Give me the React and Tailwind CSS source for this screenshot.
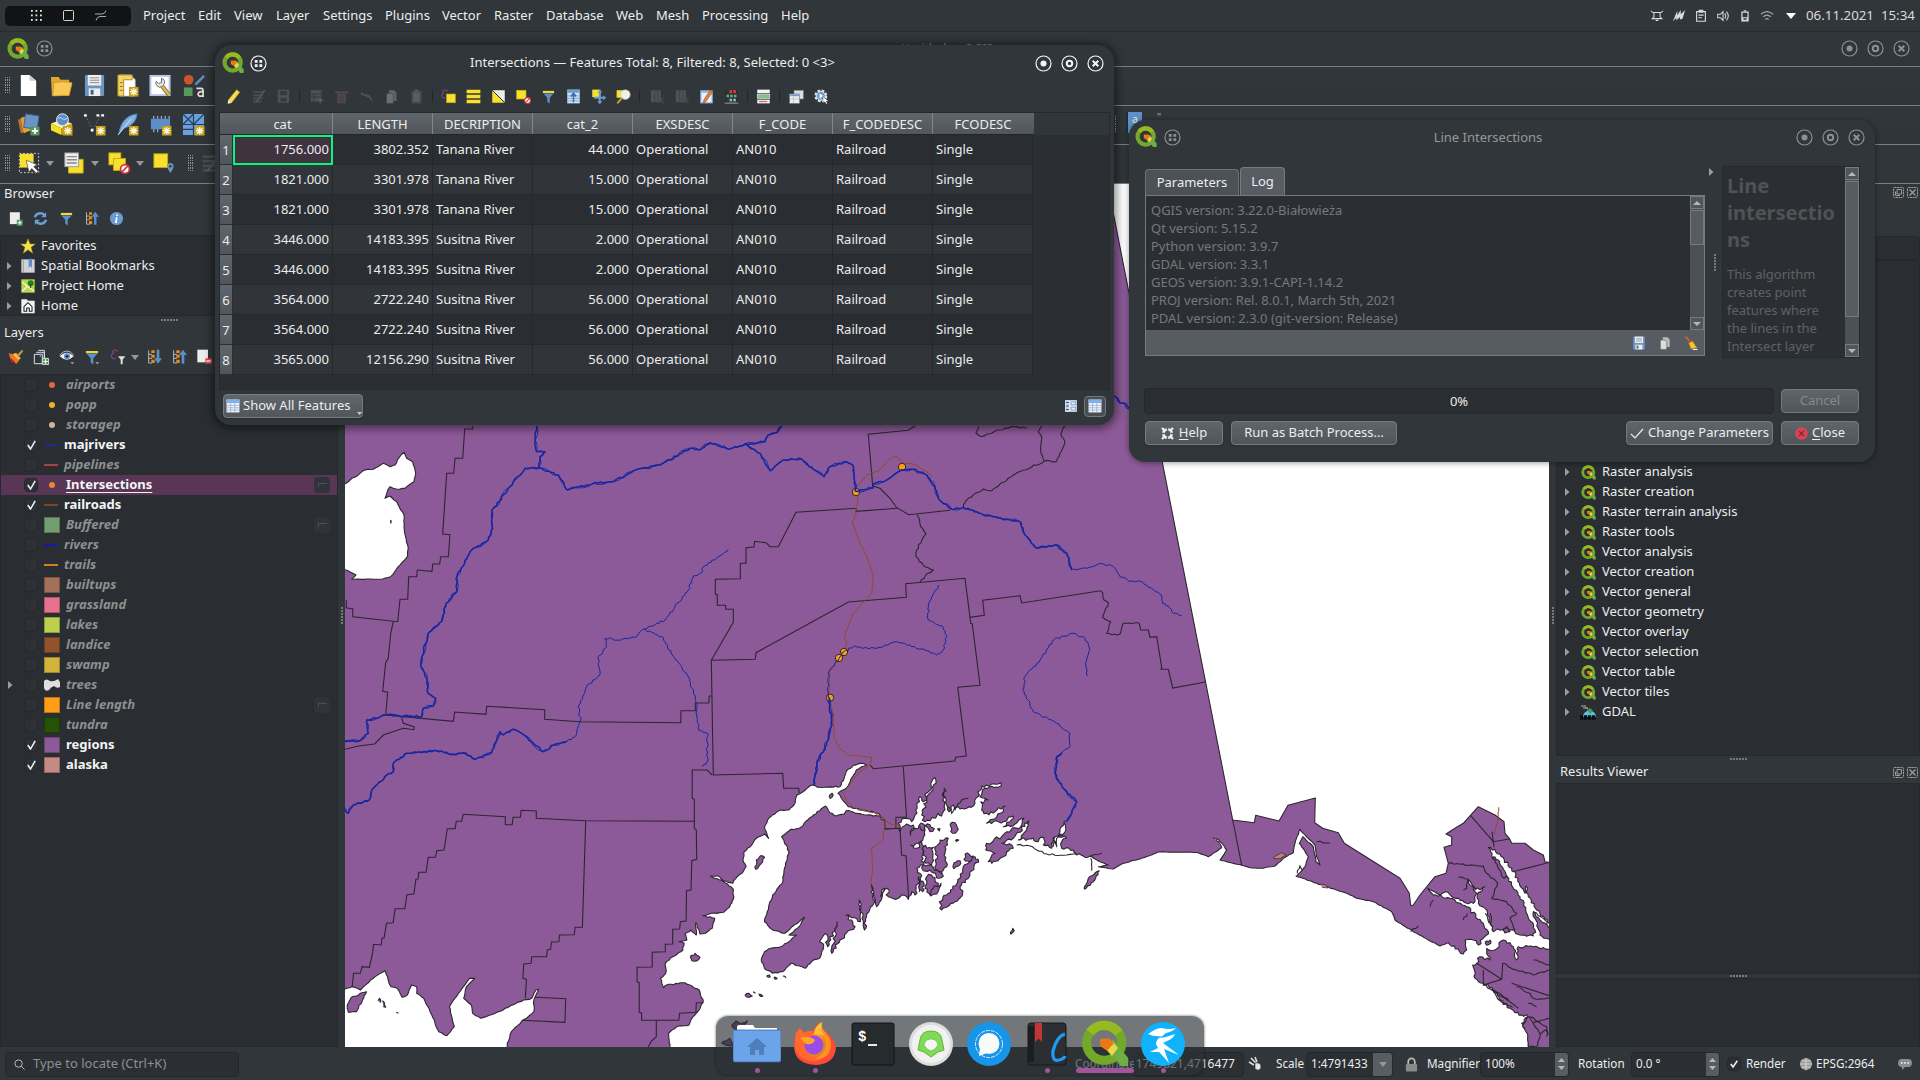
import React from "react";

/* ---------- map geometry ---------- */

// Maps a flat "x,y x,y" list drawn on a local grid to canvas coordinates.
const grid = (ox, oy, kx, ky) => (s) =>
  s.trim().split(/\s+/).map((p) => {
    const [x, y] = p.split(",").map(Number);
    return [ox + x / kx, oy + y / ky];
  });
const NW = grid(340, 420, 3, 3);
const MID = grid(680, 420, 3, 3);
const NE = grid(1080, 420, 3, 3);
const SW = grid(340, 760, 2.45, 3);
const SE = grid(1200, 760, 3, 3);
const PWS = grid(880, 750, 3, 3);

const line = (pts) => "M" + pts.map((p) => p[0].toFixed(1) + " " + p[1].toFixed(1)).join("L");

// Breaks a line into short steps and moves them sideways for a natural shoreline.
const rough = (pts, amp = 1, seed = 7, step = 3) => {
  let r = seed;
  const rnd = () => {
    r = (r * 16807) % 2147483647;
    return r / 2147483647 - 0.5;
  };
  const out = [pts[0]];
  for (let i = 1; i < pts.length; i++) {
    const [ax, ay] = pts[i - 1];
    const [bx, by] = pts[i];
    const d = Math.hypot(bx - ax, by - ay);
    const n = Math.max(1, Math.round(d / step));
    const a = typeof amp === "function" ? amp(ax, ay) : amp;
    for (let k = 1; k <= n; k++) {
      const t = k / n;
      const j = k === n ? 0 : rnd() * 2 * a;
      out.push([ax + (bx - ax) * t - ((by - ay) / (d || 1)) * j, ay + (by - ay) * t + ((bx - ax) / (d || 1)) * j]);
    }
  }
  return line(out);
};
// Fjord country is far more ragged than the open coast.
const coastAmp = (x, y) => (x > 880 && x < 1085 && y > 775 ? 2 : x > 820 && x < 925 && y > 890 ? 1.6 : x > 1440 ? 1.5 : x > 1085 ? 0.35 : 0.6);

const ocean = [
  ...SW("808,900 808,862 805,820 825,800 855,795 865,770 880,750 890,725 880,690 845,668 800,675 793,683 785,655 798,640 797,610 815,590 840,570 843,550 830,545 850,540 845,522 860,510 873,525 872,488 882,522 895,520 912,505 918,475 888,467 910,460 940,457 955,440 965,410 962,385 940,365 908,348 925,347 940,362 962,370 970,355 985,340 995,320 987,300 990,275 1005,260 1020,235 1040,222 1050,235 1040,200 1050,175 1075,152 1100,150 1112,135 1120,105 1140,90 1155,75 1175,82 1225,80 1235,55 1240,35 1258,15 1280,10 1290,15 1265,30 1250,65 1240,85 1220,100 1245,140 1280,150 1320,160 1333,180 1318,168 1290,165 1240,152 1235,163 1215,168 1200,158 1190,138 1160,165 1125,205 1105,208 1082,230 1100,275 1088,330 1085,365 1060,405 1050,440 1040,485 1060,510 1090,520 1110,498 1138,472 1125,500 1100,525 1118,525 1100,545 1080,560 1055,565 1040,575 1032,600 1040,625 1060,640 1085,635 1105,610 1140,625 1160,600 1175,595 1185,560 1175,545 1190,520 1195,560 1218,485 1205,580 1225,540 1250,510 1262,500 1240,465 1275,485 1272,420 1285,510 1290,470 1308,430 1302,375 1315,440 1335,385 1325,410"),
  ...PWS("8,430 20,415 25,440 55,445 65,435 85,448 95,425 105,435 116,380 118,425 128,400 120,370 110,355 130,345 125,320 135,300 125,275 110,295 92,285 115,280 130,262 135,240 125,225 100,240 92,255 100,225 80,222 60,245 55,220 75,205 95,215 105,195 120,140 130,155 165,83 168,100 140,150 125,195 135,215 165,205 175,190 185,198 190,185 193,115 200,165 207,185 220,165 225,180 235,170 260,175 285,160 305,108 355,102 363,98 355,112 315,115 300,140 325,150 302,155 305,180 320,190 345,185 375,168 360,190 320,220 370,215 400,198 390,215 370,230 405,222 432,205 425,225 370,255 320,280 317,300 345,310 325,335 335,340 370,320 400,295 395,285 365,280 400,265 447,212 440,240 415,270 460,265 475,275 490,262 490,285 515,295 520,262 528,285 525,260 540,245 553,212 555,245 535,260 560,265 545,275 545,295 580,300 590,315 630,318 660,335 685,345 655,350"),
  ...NE("100,1347 125,1332 190,1313 235,1296 300,1296 355,1298 385,1310 425,1283 415,1265 400,1255 415,1258 430,1275 440,1290 420,1320 485,1336 510,1343 545,1345 585,1338 610,1315 640,1298 645,1270 660,1228 670,1240 705,1275 710,1310 720,1335 708,1325 700,1280 668,1250 658,1270 685,1310 675,1340 650,1368"),
  ...SE("288,348 350,370 440,400 470,415 520,425 575,455 585,480 640,515 720,558 745,548 790,582 800,570 795,540 820,540 835,555 860,525 865,515 850,490 800,440 750,415 700,405 683,385 720,405 735,395 755,410 800,430 825,425 830,400 805,360 825,390 855,380 832,405 835,430 860,450 880,515 920,500 960,525 1000,528 1005,510 960,410 920,350 885,300 865,262 885,268 935,325 975,400 978,378 985,410 1010,450 1060,500 1060,510 1020,480 1000,455 1020,525 1060,545 1060,568 1000,560 955,560 950,600 940,560 910,540 885,570 860,565 870,600 840,590 830,610 818,615 825,655 850,670 880,690 900,720 930,745 965,765 985,770 965,790 985,820 985,900"),
];
const canada = [
  [1106, 176],
  ...NE("458,1200 523,1208 527,1186 597,1203 624,1156 706,1134 704,1208 728,1225 775,1238 793,1270 960,1375"),
  ...SE("600,355 628,400 632,437 640,435 660,405 705,350 738,340 745,310 732,262 755,255 755,230 738,222 765,205 790,190 835,140 885,165 912,185 915,220 928,235 935,250 975,250 1000,270 1030,285 1035,305 1060,308"),
  [1560, 176],
];
const bristol = SW("-9,695 30,680 50,690 75,660 110,632 118,660 125,680 140,685 152,712 165,705 175,675 188,680 188,700 205,715 225,765 242,815 262,827 280,800 268,740 290,700 318,655 330,655 310,680 303,715 322,735 325,760 345,775 380,760 450,720 470,715 480,690 487,688 475,720 475,755 445,785 420,815 410,850 410,880 -9,880");
const lake = NW("0,205 30,180 75,150 100,148 130,130 150,140 165,135 178,112 192,97 200,115 218,125 227,160 222,185 195,205 170,208 150,200 142,215 135,235 150,228 170,245 192,285 193,330 205,385 203,408 175,440 152,470 120,478 35,478 48,465 0,440");

const islands = [
  PWS("295,328 270,375 240,410 248,430 225,455 185,480 178,455 200,435 240,385 250,350 285,320 295,328"),
  PWS("135,228 150,224 163,236 150,245 135,228"),
  PWS("210,225 225,218 235,238 218,250 210,225"),
  PWS("220,345 240,332 236,348 222,356 220,345"),
  PWS("255,312 280,318 270,335 252,328 255,312"),
  PWS("165,300 180,270 205,265 195,310 200,350 185,372 165,350 172,325 165,300"),
  PWS("125,350 150,345 190,378 178,385 150,360 130,362 125,350"),
  PWS("140,380 155,375 175,400 150,435 135,415 140,380"),
  PWS("160,415 183,400 170,432 152,438 160,415"),
  PWS("130,290 160,292 155,345 138,340 130,290"),
  PWS("118,225 130,222 134,240 122,238 118,225"),
  PWS("172,236 180,236 178,243 172,236"),
  PWS("120,395 132,400 128,425 118,418 120,395"),
  PWS("613,418 625,385 658,362 640,395 613,418"),
  PWS("392,553 398,535 403,542 392,553"),
  PWS("226,272 236,270 228,275"),
  SW("1018,328 1020,300 1030,287 1040,292 1025,322 1018,328"),
  SW("858,592 870,580 882,592 874,603 862,602 858,592"),
  SW("1198,112 1206,100 1208,106 1200,116"),
  SW("18,740 28,712 65,695 40,755 20,757 18,740"),
  SW("93,722 97,715 99,728"), SW("104,722 112,742 106,740"), SW("138,757 143,760"),
  SW("992,706 1002,700 1010,708 998,712 992,706"), SW("1012,695 1018,700"), SW("1025,702 1036,709 1027,706"),
  SW("1045,648 1052,645 1054,651 1045,648"), SW("1063,652 1071,656 1066,658 1063,652"), SW("1085,648 1093,654"),
  SW("960,800 970,782 985,790 998,782 990,800 975,815 960,800"), SW("935,850 955,835 962,858 945,856 935,850"),
  SE("878,290 895,300 922,350 912,355 895,325 878,290"),
  SE("855,548 870,540 872,550 860,556 855,548"), SE("908,510 925,505 930,515 915,519 908,510"),
  SE("1000,790 1030,780 1055,775 1055,830 1035,810 1018,822 1000,790"),
  SE("985,770 1000,790 1020,820 1010,860 985,862 982,820 968,800 985,770"),
];

const borders = [
  NW("399,18 398,27 374,27 368,115 345,115 341,160 320,160 308,342 330,344 325,410 302,410 299,432 278,432 276,454 232,450 230,470 206,470 203,538 180,538 173,605 38,590 38,567 19,563 19,540"),
  NW("160,605 152,640 145,715 137,728 128,814 143,817 137,885 340,904 344,876 438,883 440,859 614,869 614,898 720,905 1022,908 1023,872 1066,872 1066,849 1106,849 1108,828 1114,828"),
  NW("185,892 190,910 222,920 222,929 190,925 130,945 104,972 60,977 15,988"),
  MID("528,265 348,277 295,380 270,380 258,368 224,364 222,381 198,383 198,430 181,430 181,476 106,478 106,522 112,524 112,556 137,556 137,568 160,568 160,607 94,721 100,1065 308,1060 311,1105 356,1105 358,1120"),
  MID("94,721 226,718 228,698 505,546 679,532 677,491 855,475 870,592 913,586 908,541 1020,527 1025,549 1262,512"),
  MID("870,592 872,610 877,612 900,796 833,802 859,1008 827,1012 824,1023 580,1046 570,1035"),
  MID("705,18 685,31 565,43 578,198 600,205 630,235 650,263 686,284 810,271"),
  MID("528,265 528,274 652,265"),
  SW("1380,20 1388,172 1362,172 1362,205 1335,207 1335,180"),
  SW("1335,207 1372,205 1376,285 1387,288 1393,415"),
  SW("912,45 900,30 863,30 863,115 868,118 868,205 873,210 874,298 862,302 860,390 849,392 848,483 834,485 832,507 815,508 815,552 797,553 797,575 765,577 765,621 728,622 728,665 733,668 733,757 739,759 739,781 830,781 832,760 872,757 873,728 890,728"),
  SW("775,781 775,830 762,845 755,862"),
  SW("30,680 33,640 50,640 54,620 72,622 80,577 82,553 101,555 103,535 108,533 114,490 130,488 135,446 159,446 164,404 181,402 186,358 191,357 193,337 211,337 216,292 234,292 237,272 255,270 263,206 282,206 285,184 298,184 302,163 405,170 405,194 422,194 424,172 442,172 444,151 481,153 481,175 602,182 868,184"),
  SW("602,182 594,502 576,502 574,524 538,525 536,545 518,546 516,568 508,570 506,590 470,590 468,610 450,612 448,655 457,658 454,715"),
  SW("478,712 553,716 551,787 445,781"),
  NE("458,1200 485,1336"),
  NE("178,610 182,630 205,630 210,652 230,650 245,742 243,748 265,748 278,804 376,786"),
  SE("812,167 880,245 928,237"), SE("876,215 882,262"), SE("938,335 1050,307"),
  SE("908,610 905,658 850,675 850,630"), SE("830,610 905,658"),
  SE("935,670 1050,708"),
];
const softBorders = [
  MID("711,284 722,320 738,342 715,375 708,410 730,437 760,450 735,468 721,487"),
  MID("850,262 860,240 910,207 935,212 985,175 1030,150 1093,124 1082,90 1085,50 1075,35 1085,18"),
  MID("1093,124 1130,124 1155,70 1143,40 1155,18"),
  MID("895,18 888,40 905,50 960,30 1000,20 1040,25"),
  NE("63,512 72,540 85,548 68,592 92,605 80,640 95,645 120,642 130,610 178,610"),
  SE("745,310 850,318 860,340 893,370 875,415 920,425 950,460 930,475 945,510"),
  SE("908,610 950,630 1000,645 1050,630"), SE("850,675 880,690 920,715 955,745"),
  SE("872,688 900,722 938,742"), SE("880,695 895,705 925,722"),
  SE("950,680 990,700 1000,715 1050,715"), SE("985,730 1010,740"), SE("990,770 1040,800 1040,830"),
  PWS("410,285 450,288 470,300 500,312 550,316 590,312"), PWS("520,290 530,265 550,255"),
  PWS("512,285 525,275 530,292"), PWS("630,320 665,310"), PWS("632,325 635,362"), PWS("205,170 215,190 245,150 265,145"),
  SE("775,352 805,358 800,385 790,390"), SE("350,245 390,250"), SE("690,440 700,420"), SE("790,480 802,460"), SE("870,460 875,500"), SE("855,460 868,490"),
  SE("1000,600 1050,615"), SE("1000,455 1045,490"), SE("292,340 300,318 306,330"), SE("632,515 655,498"),
];
const thickRivers = [
  NW("590,18 586,60 590,95 615,95 600,110 596,145 555,145 510,200 455,275 458,325 445,360 390,395 350,470 350,515 318,550 305,605 265,640 245,710 242,735 262,780 263,818 287,835 280,858 250,865 245,890 137,885 80,900 85,940 60,962 10,962"),
  [...NW("596,145 655,165 682,210 760,190 820,185 885,150 960,135 1050,85 1080,90 1110,68 1165,88 1220,72"),
   ...MID("200,75 240,100 270,152 310,120 365,117 400,148 432,170 450,140 500,125 518,135 526,213 578,205 580,192 620,180 665,150 700,148 740,165 765,200 775,235 815,268 850,262 910,285 940,290 1020,305 1035,345 1070,385 1130,375 1160,400 1175,450")],
  MID("190,75 255,65 265,45 290,38 305,18"),
  NW("10,1165 25,1180 40,1155 88,1140 95,1110 140,1065 160,1055 160,1030 200,1000 290,992 340,1003 370,998 405,1018 455,998 470,960 480,935 490,945 520,928 545,940 610,995 640,975 680,965"),
  MID("445,830 455,900 445,960 410,1030 402,1095"),
  PWS("545,8 530,20 525,70 550,115 590,155 575,190 558,215"),
  [[1114, 396], [1120, 403], [1124, 403], [1130, 410]],
];
const thinRivers = [
  [...MID("1175,450 1220,445 1262,430 1300,440"), ...NE("105,445 120,470 150,485 178,482 245,525 248,550 265,558 280,580 305,586")],
  NW("680,965 705,950 722,900 715,860 740,800 780,765 775,710 800,680 795,655 835,660 890,650 910,628 975,600 1045,510 1060,468 1085,458 1090,440 1165,388"),
  NW("910,628 965,650 1000,710 1040,760 1066,835 1070,872 1076,930 1102,940 1102,1025 1087,1040"),
  MID("775,495 745,555 745,600 790,622 800,650 790,690 770,705 735,690 650,665 610,680 570,685 520,680 492,695 477,715 447,755 445,830"),
  MID("1223,768 1218,725 1230,690 1215,655 1178,640 1120,660 1080,720 1035,770 1028,810 1060,875 1130,910 1170,940 1170,980 1135,1010"),
];
const rails = [
  MID("528,215 535,245 527,265 528,285 517,308 540,370 560,410 580,470 575,520 520,580 500,630 493,655 500,665 492,695 477,715 450,755 445,830 460,880 463,955 480,985 505,1005 575,1012 570,1035 540,1055 500,1105"),
  MID("528,205 560,165 600,150 630,115 650,110 670,130 700,132 740,155 757,170"),
  SW("1230,95 1245,130 1270,150 1310,158 1335,180 1350,193 1368,195"),
  SW("1335,185 1330,240 1302,265 1305,320 1300,375"),
  SE("896,142 893,185 882,222"),
];
const hits = MID("666,141 528,216 492,696 477,714 450,833");

function MapCanvas() {
  return (
    <svg className="block h-full w-full" viewBox="345 184 1204 863" preserveAspectRatio="none">
      <rect x="345" y="184" width="1204" height="863" fill="#8c5a98" />
      <g stroke="#2d2630" strokeWidth="1.1" fill="#fff" strokeLinejoin="round">
        <path d={rough(ocean, coastAmp, 11, 2.4)} />
        <path d={line(canada) + "Z"} />
        <path d={rough(bristol, 0.5, 5)} />
        <path d={rough(lake, 0.5, 9)} />
        <g fill="#8c5a98">{islands.map((p, i) => <path key={i} d={rough(p, i < 13 ? 1.5 : 0.8, 21 + i, 2.2)} />)}</g>
        <path d={line(NW("151,303 153,301 153,309 151,308"))} fill="#2d2630" />
        <g fill="#c08070" strokeWidth=".7">
          <path d={line(SE("222,290 245,278 258,285 240,296 222,296 222,290"))} />
          <path d={line(SE("362,372 376,374 385,384 366,382"))} />
          <path d={line(SE("38,234 52,236 48,242"))} />
        </g>
      </g>
      <g stroke="#2d2630" strokeWidth="1.1" fill="none">
        {borders.map((p, i) => <path key={i} d={line(p)} />)}
        {softBorders.map((p, i) => <path key={i} d={rough(p, 0.9, 31 + i)} />)}
      </g>
      <g stroke="#94492a" strokeWidth="1" fill="none">
        {rails.map((p, i) => <path key={i} d={rough(p, 0.3, 3 + i)} />)}
      </g>
      <g stroke="#2d2630" strokeWidth="1" fill="#ff9d0e">
        {hits.map(([x, y], i) => <circle key={i} cx={x} cy={y} r="3.7" />)}
      </g>
      <g stroke="#1426a2" fill="none" strokeLinejoin="round">
        {thickRivers.map((p, i) => <path key={i} strokeWidth="1.5" d={rough(p, 0.9, 41 + i, 2.5)} />)}
        {thickRivers.map((p, i) => <path key={i} strokeWidth=".9" d={rough(p, 1.9, 77 + i, 5)} />)}
        {thinRivers.map((p, i) => <path key={i} strokeWidth="1" d={rough(p, 1, 51 + i, 2.2)} />)}
      </g>
    </svg>
  );
}

/* ---------- icons ---------- */

const Svg = ({ s = 18, vb = 24, children, className = "" }) => (
  <svg width={s} height={s} viewBox={`0 0 ${vb} ${vb}`} className={"block shrink-0 " + className} fill="none">{children}</svg>
);
const QLogo = ({ s = 22, className }) => (
  <Svg s={s} className={className}>
    <circle cx="11.6" cy="11.4" r="8.8" stroke="#74a82a" strokeWidth="4.6" />
    <path d="M4.6 6.2A8.8 8.8 0 0 1 18.8 6.4" stroke="#96ba20" strokeWidth="4.6" />
    <path d="M13 12.6l3-3L23.6 19v4h-4z" fill="#6fae45" />
    <path d="M13 15.2l3-4.2 2.5 3-3 4z" fill="#e8d84a" />
    <path d="M9.6 9.4h4.8l2 2.4-3.4 3.6-3.4-2.4z" fill="#ee7913" />
  </Svg>
);
const star = <g><rect x="13.5" y="13.5" width="10" height="10" fill="#c99d1c" /><path d="M18.5 14.5v8M14.5 18.5h8M15.6 15.6l5.8 5.8M21.4 15.6l-5.8 5.8" stroke="#fffbe0" strokeWidth="1.3" /></g>;
const plus = <g><rect x="14" y="14" width="9.5" height="9.5" rx="1" fill="#4e9a5b" /><path d="M18.75 15.5v6.5M15.5 18.75h6.5" stroke="#fff" strokeWidth="1.8" /></g>;
const nope = <g><circle cx="18.5" cy="18.5" r="4.8" fill="#fff" stroke="#d5303a" strokeWidth="1.8" /><path d="M15.3 21.7l6.4-6.4" stroke="#d5303a" strokeWidth="1.8" /></g>;
const funnel = <g><path d="M3 3h18v3.5H3z" fill="#f2d63b" /><path d="M4 7h16l-6 7v9l-4-2.5V14z" fill="#5a8fc8" /></g>;
const tree = <g><path d="M4 2v19h5M4 8h5M4 14h5" stroke="#c8cacb" strokeWidth="1.3" /><path d="M8 2h5v4H8zM8 8.500h5v4.500H8zM8 16h5v5H8z" fill="#e98a1a" /></g>;
const sheet = <path d="M4 1h11l5 5v17H4z" fill="#fff" stroke="#c4c4c4" strokeWidth=".8" />;

const I = {
  page: <g><path d="M4 1h9l7 6v16H4z" fill="#fff" /><path d="M13 1v6h7z" fill="#ccc" /></g>,
  folder: <g><path d="M1 3h8l2 3h9v4h3l-3 13H2z" fill="#dca833" /><path d="M4 9l9-1 10 1-3 13-17 1z" fill="#f6c958" stroke="#c99520" strokeWidth=".7" /></g>,
  save: <g><rect x="2" y="1" width="20" height="22" rx="1" fill="#6b93c4" /><rect x="5" y="1" width="14" height="11" fill="#eee" /><path d="M7 4h10M7 6.500h10M7 9h10" stroke="#888" /><rect x="6" y="15" width="12" height="8" fill="#eee" /><rect x="8" y="16.500" width="3" height="5" fill="#3d5f8c" /></g>,
  layoutNew: <g>{sheet}<path d="M2 1h15v5H8v17H2z" fill="#f0d56a" stroke="#b38f1a" /><path d="M4 9h3M4 13h3M4 17h3" stroke="#8f701a" />{star}</g>,
  wrench: <g><rect x="1.500" y="2" width="20" height="20" fill="#fff" stroke="#b8c5e8" strokeWidth="2" /><path d="M14 13l7 9" stroke="#8a7433" strokeWidth="4.500" /><path d="M14 13l7 9" stroke="#d8bb5a" strokeWidth="2.500" /><path d="M8 12a4.500 4.500 0 0 0 6 1l2-3a4.500 4.500 0 0 0-3-5.500v4.500l-3 1-2.500-2.500a4.500 4.500 0 0 0 .5 4.500z" fill="#e6e6e6" stroke="#666" /></g>,
  style: <g><circle cx="7" cy="6" r="5" fill="#c9562c" /><path d="M14 11L23 2" stroke="#5b8fc9" strokeWidth="2.500" /><rect x="2" y="14" width="9" height="9" fill="#569a62" /><path d="M15 15h5c2 0 2 2 2 3v5h-4a3 2.400 0 1 1 4-4" stroke="#ddd" strokeWidth="1.800" /></g>,
  layerAdd: <g><path d="M1 7l10-4 3 15-10 3z" fill="#b8742c" /><path d="M4 5l10-3 3 15-10 4z" fill="#e0a13a" /><path d="M9 1l14 2-2 14-14-2z" fill="#6b93c4" stroke="#3b6699" />{plus}</g>,
  globe: <g><path d="M1 11l11-4 11 4-11 5z" fill="#fff2a0" /><path d="M1 11l11 5v7L1 18z" fill="#f4e02a" /><path d="M12 16l11-5v7l-11 5z" fill="#d3ac16" /><circle cx="13" cy="7" r="6.200" fill="#5b8fc9" stroke="#eee" /><path d="M8 6c3-4 7 4 10-1" stroke="#cfe0f3" />{star}</g>,
  vect: <g><path d="M3 3l7 15 8-15" stroke="#777" strokeDasharray="1.500 2" /><circle cx="2.500" cy="2.500" r="1.500" fill="#fff" /><circle cx="9.500" cy="18" r="1.500" fill="#fff" /><path d="M14 2.500h3M19 2.500h3" stroke="#fff" strokeWidth="2.500" />{star}</g>,
  feather: <g><path d="M3 22C4 12 10 2 22 1c-1 8-6 13-14 15z" fill="#7fb0e0" stroke="#4a7dba" /><path d="M2 23L16 6" stroke="#d6e8fa" />{star}</g>,
  chip: <g><rect x="2" y="6" width="20" height="11" fill="#5b8fc9" /><path d="M5 3v3M9 3v3M13 3v3M17 3v3M21 3v3M5 17v3M9 17v3" stroke="#aac" strokeWidth="1.300" />{star}</g>,
  mesh: <g><rect x="1" y="1" width="22" height="22" fill="#6ba0dc" /><path d="M1 12h22M12 1v22M1 1l11 11M12 12L23 1M12 1L1 12M1 17h11" stroke="#25405e" strokeWidth="1.300" />{star}</g>,
  select: <g><rect x="1.500" y="1.500" width="21" height="21" stroke="#ddd" strokeDasharray="2 2" /><rect x="2" y="2" width="15" height="15" fill="#f7e02e" /><path d="M9 9l3 13 3-4 5 5 2-2-5-5 4-2z" fill="#fff" stroke="#555" strokeWidth=".8" /></g>,
  form: <g><path d="M8 8h14v15H6V15z" fill="#f7e02e" stroke="#c9a80f" /><rect x="2" y="1" width="15" height="15" fill="#eee" stroke="#999" /><path d="M4 5h11M4 8.500h11M4 12h11" stroke="#888" strokeWidth="1.500" /></g>,
  desel: <g><rect x="1" y="1" width="13" height="13" fill="#f7e02e" stroke="#c9a80f" /><rect x="6" y="7" width="13" height="13" fill="#f7e02e" stroke="#c9a80f" />{nope}</g>,
  loc: <g><rect x="1" y="2" width="15" height="15" fill="#f7e02e" stroke="#c9a80f" /><path d="M19 23c-6-8-3-11 0-11s6 3 0 11z" fill="#6b93b4" /><circle cx="19" cy="15.500" r="1.300" fill="#333" /></g>,
  pageAdd: <g><rect x="3" y="2" width="16" height="19" fill="#eee" />{plus}</g>,
  pageDel: <g><rect x="2" y="1" width="16" height="19" fill="#eee" /><rect x="14" y="14" width="9.500" height="8" rx="1" fill="#e04848" /><path d="M15.500 18h6.500" stroke="#fff" strokeWidth="2" /></g>,
  refresh: <g stroke="#6b9fd8" strokeWidth="4"><path d="M3 10a9 8 0 0 1 15-4" /><path d="M21 14a9 8 0 0 1-15 4" /><path d="M21 2v8h-8zM3 22v-8h8z" fill="#6b9fd8" stroke="none" /></g>,
  funnel,
  treeUp: <g>{tree}<path d="M18 22V6" stroke="#5a8fc8" strokeWidth="4" /><path d="M12 9l6-8 6 8z" fill="#5a8fc8" /></g>,
  treeDown: <g>{tree}<path d="M18 1v16" stroke="#5a8fc8" strokeWidth="4" /><path d="M12 14l6 8 6-8z" fill="#5a8fc8" /></g>,
  info: <g><circle cx="12" cy="12" r="10.500" fill="#6b9bd0" /><path d="M13 5.500v2.500M12.500 10l-1.500 8h2" stroke="#fff" strokeWidth="2.600" /></g>,
  brush: <g><path d="M1 6l6 2 5-2 7 8-6 8-8-3z" fill="#e4752b" /><path d="M7 8l5-2 7 8-4 2z" fill="#f0c23a" /><path d="M13 9l8-8 2 2-7 9z" fill="#c98f3c" /><path d="M4 15l6 6" stroke="#b02" strokeWidth="2" /></g>,
  group: <g stroke="#ddd" strokeWidth="1.500"><path d="M2 8h12v14H2zM5 5h12v14M8 2h9v12" /><path d="M11 12V4" stroke="#6b9bd0" />{plus}</g>,
  eye: <g><path d="M1 11Q12 0 22 11Q12 21 1 11z" fill="#f1f1f1" /><circle cx="12" cy="11" r="4.500" fill="#5a8fc8" /><circle cx="12" cy="11" r="1.800" fill="#123" /><path d="M1 9Q12-3 22 9" stroke="#bbb" strokeWidth="1.500" /><path d="M17 20h6l-3 3z" fill="#aaa" /></g>,
  funnelDrop: <g>{funnel}<path d="M17 20h6l-3 3z" fill="#aaa" /></g>,
  eps: <g><path d="M12 3C6 0 2 3 5 7c-5 1-4 9 4 7" stroke="#7a3f80" strokeWidth="2" /><path d="M12 11h11l-4 5v7h-3v-7z" fill="#ddd" /></g>,
  pencil: <g><path d="M17 1l5 4L9 22l-6 1 1-6z" fill="#f4dd52" stroke="#b8971b" /><path d="M4 17l5 5-6 1z" fill="#f6e8c8" /></g>,
  multi: <g><path d="M3 5h16M3 10h16M3 15h16M3 20h14" stroke="#777" strokeWidth="3" /><path d="M22 2L8 21" stroke="#999" strokeWidth="2.500" /></g>,
  saveDim: <g><rect x="3" y="1" width="18" height="21" rx="1" fill="#888" /><rect x="6" y="3" width="12" height="7" fill="#444" /><rect x="7" y="14" width="10" height="6" fill="#444" /></g>,
  tableDim: <g><rect x="3" y="2" width="17" height="18" fill="#888" /><path d="M3 8h17M3 13h17M8 8v12" stroke="#333" strokeWidth="1.500" /><path d="M18 14v9M14 18h9" stroke="#aaa" strokeWidth="2" /></g>,
  trash: <g><path d="M5 8h14v15H5z" fill="#8a6a6a" /><path d="M2 4h20v3H2z" fill="#9a7a7a" /><path d="M9 10v11M12 10v11M15 10v11" stroke="#444" /></g>,
  cut: <path d="M3 6l12 7M3 8l13 3 5 8" stroke="#888" strokeWidth="2.500" />,
  copy: <g><path d="M8 2h8l4 4v13H8z" fill="#bbb" /><path d="M4 7h8l3 3v13H4z" fill="#ddd" stroke="#555" /></g>,
  paste: <g><path d="M4 3h16v20H4z" fill="#777" /><path d="M7 6h10v14H7z" fill="#aaa" /><path d="M9 1h6v4H9z" fill="#999" /></g>,
  epsSel: <g><path d="M11 3C5 0 1 3 4 7c-5 1-4 9 4 7" stroke="#7a3f80" strokeWidth="2" /><rect x="9" y="8" width="14" height="14" fill="#f7e02e" stroke="#c9a80f" /></g>,
  rows: <path d="M1 4h22M1 12h22M1 20h22" stroke="#f7e02e" strokeWidth="5.500" />,
  invert: <g><path d="M2 2h20v20z" fill="#eee" /><path d="M2 2v20h20z" fill="#f7e02e" /><path d="M2 2l20 20" stroke="#222" strokeWidth="1.500" /></g>,
  unselect: <g><rect x="1" y="2" width="15" height="14" fill="#f7e02e" stroke="#c9a80f" />{nope}</g>,
  moveTop: <g><rect x="2" y="1" width="20" height="22" fill="#cfe0f3" /><rect x="2" y="1" width="20" height="5" fill="#6b9bd0" /><path d="M2 11h20M2 15h20M2 19h20" stroke="#5a8fc8" /><path d="M12 21V9M8 12l4-5 4 5" stroke="#3a6ba8" strokeWidth="2.500" /></g>,
  pan: <g><rect x="2" y="1" width="13" height="12" fill="#f7e02e" /><path d="M14 4v19M5 14h18" stroke="#6b9bd0" strokeWidth="3" /><path d="M14 1l4 5h-8zM14 24l4-5h-8zM24 14l-5-4v8z" fill="#6b9bd0" /></g>,
  zoomSel: <g><rect x="1" y="2" width="13" height="12" fill="#f7e02e" /><circle cx="15" cy="9" r="7.500" fill="#f3efe2" stroke="#ccc" strokeWidth="1.500" /><path d="M9 15l-7 8" stroke="#c9a23c" strokeWidth="3" /></g>,
  colDim: <g><rect x="3" y="2" width="16" height="19" fill="#888" /><path d="M9 2v19M14 2v19" stroke="#444" /><path d="M14 14l9 8M23 14l-9 8" stroke="#777" strokeWidth="2" /></g>,
  calcEdit: <g><rect x="2" y="2" width="20" height="21" fill="#8fb8e6" /><path d="M4 6h16v15H4z" fill="#e8f0fa" /><path d="M18 2l4 2L11 20l-4 2 1-5z" fill="#e88236" stroke="#8c4a14" /></g>,
  abacus: <g><path d="M1 22.500h22" stroke="#aaa" strokeWidth="1.500" /><path d="M3 1v21M21 1v21" stroke="#222" /><path d="M9 4h4M15 4h4" stroke="#e03838" strokeWidth="5" /><path d="M4 11h4M10 11h4M16 11h4" stroke="#59b36a" strokeWidth="4" /><path d="M9 17.500h4M15 17.500h4" stroke="#8fb8e6" strokeWidth="4" /></g>,
  cond: <g><rect x="2" y="1" width="20" height="6" fill="#f2f2f2" /><rect x="2" y="9" width="20" height="6" fill="#7cc487" stroke="#eee" /><rect x="2" y="17" width="20" height="6" fill="#f2f2f2" /><path d="M5 20h13" stroke="#e06060" strokeWidth="2" /></g>,
  dockWin: <g><rect x="8" y="2" width="15" height="14" fill="#ddd" stroke="#777" /><rect x="1" y="8" width="16" height="15" fill="#eee" stroke="#777" /><path d="M2 10h14" stroke="#6b9bd0" strokeWidth="3" /><path d="M7 12v10M2 16h14" stroke="#8fb8e6" /></g>,
  gear: <g><circle cx="11" cy="11" r="8.500" stroke="#dfe3e8" strokeWidth="3.500" strokeDasharray="4.500 2.200" /><circle cx="11" cy="11" r="7" fill="#6b9bd0" stroke="#dfe3e8" strokeWidth="1.500" /><path d="M9 7l6 4-6 4z" fill="#fff" /><path d="M14 12l9 7-3.500.5 2 3.500-2 1-2-3.500-2.500 2z" fill="#fff" stroke="#333" strokeWidth=".6" /></g>,
  broom: <g><path d="M3 1l9 11" stroke="#c46a2a" strokeWidth="3" /><path d="M8 11l6-3 8 12-10 2z" fill="#f3c62a" stroke="#b88a12" /><path d="M8 11l6-3" stroke="#c33" strokeWidth="2.500" /><path d="M15 23h8" stroke="#eee" strokeWidth="2" /></g>,
  formView: <g><rect x="2" y="2" width="20" height="20" fill="#e8eef6" /><path d="M2 2h7v20H2z" fill="#c4d6ec" /><path d="M4 6h4M4 12h4M4 18h4" stroke="#333" strokeWidth="1.800" /><rect x="12" y="5" width="8" height="5" stroke="#6b9bd0" strokeWidth="1.500" /><rect x="12" y="14" width="8" height="5" stroke="#6b9bd0" strokeWidth="1.500" /></g>,
  tableView: <g><rect x="1" y="1" width="22" height="22" fill="#f2f6fb" /><rect x="1" y="1" width="22" height="6" fill="#7fb0e6" /><path d="M1 11h22M1 15h22M1 19h22M8 7v16M15 7v16" stroke="#8fa9c6" strokeWidth="1.300" /></g>,
};
const Ic = ({ n, s = 18, dim }) => <Svg s={s} className={dim ? "opacity-35" : ""}>{I[n]}</Svg>;

const Handle = () => (
  <div className="grid shrink-0 grid-cols-3 gap-px">
    {Array.from({ length: 21 }, (_, i) => <i key={i} className="block h-[1.5px] w-px bg-[#8b8e90]" />)}
  </div>
);
const HGrip = () => <div className="flex gap-px">{Array.from({ length: 6 }, (_, i) => <i key={i} className="block size-[2px] bg-[#77797b]" />)}</div>;
const VGrip = () => <div className="flex flex-col gap-px">{Array.from({ length: 6 }, (_, i) => <i key={i} className="block size-[2px] bg-[#77797b]" />)}</div>;
const Drop = () => <svg width="8" height="5" viewBox="0 0 8 5" className="block shrink-0"><path d="M0 0h8L4 5z" fill="#94989a" /></svg>;
const Arrow = ({ hide }) => <svg width="5" height="8" viewBox="0 0 5 8" className={"block shrink-0 " + (hide ? "invisible" : "")}><path d="M0 0l4.500 4L0 8z" fill="#9b9e9f" /></svg>;

const WinBtn = ({ k, bright }) => (
  <Svg s={17} vb={17} className={bright ? "text-[#f4f5f5]" : "text-[#8d9092]"}>
    <circle cx="8.500" cy="8.500" r="7.500" stroke="currentColor" strokeWidth="1.200" />
    {k === "min" && <circle cx="8.500" cy="8.500" r="3" fill="currentColor" />}
    {k === "max" && <circle cx="8.500" cy="8.500" r="2.700" stroke="currentColor" strokeWidth="2" />}
    {k === "x" && <path d="M5.700 5.700l5.600 5.600M11.300 5.700l-5.600 5.600" stroke="currentColor" strokeWidth="2" />}
    {k === "dots" && <path d="M4.800 5h2.800v2.800H4.800zM9.400 5h2.800v2.800H9.400zM4.800 9.300h2.800v2.800H4.800zM9.400 9.300h2.800v2.800H9.400z" fill="currentColor" />}
  </Svg>
);
const WinBtns = ({ bright }) => <div className="flex gap-[9px]"><WinBtn k="min" bright={bright} /><WinBtn k="max" bright={bright} /><WinBtn k="x" bright={bright} /></div>;

/* ---------- top bars ---------- */

const menus = [["Project", "w-[55px]"], ["Edit", "w-[36px]"], ["View", "w-[42px]"], ["Layer", "w-[47px]"], ["Settings", "w-[62px]"], ["Plugins", "w-[57px]"], ["Vector", "w-[52px]"], ["Raster", "w-[52px]"], ["Database", "w-[70px]"], ["Web", "w-[40px]"], ["Mesh", "w-[46px]"], ["Processing", "w-[79px]"], ["Help", "w-[40px]"]];

const Tray = () => (
  <div className="ml-auto flex items-center text-[#d9dadb]">
    {[
      <path d="M3 4h10M4.500 4v5l-2 2h11l-2-2V4M6.500 13h3M1 2l2 2M15 2l-2 2" stroke="currentColor" strokeWidth="1.200" />,
      <path d="M1 14l5-12v5l4-6v5l5-5-3 10-3 1v-3l-4 4v-3z" fill="currentColor" />,
      <path d="M3 3h10v11H3zM6 1.500h4v2H6zM5 7h6M5 10h4" stroke="currentColor" strokeWidth="1.300" />,
      <path d="M2 6h3l3-3v10L5 10H2zM10 5q2 3 0 6M12 3q4 5 0 10" stroke="currentColor" strokeWidth="1.200" />,
      <path d="M4.500 3.500h7v10h-7zM6.500 2h3M5.500 10h5v3h-5z" stroke="currentColor" strokeWidth="1.400" />,
      <path d="M1 6q7-6 14 0M3.500 9q4.500-4 9 0M6 12q2-2 4 0" stroke="currentColor" strokeWidth="1.200" opacity=".7" />,
    ].map((p, i) => <span key={i} className="flex w-[22px] justify-center"><Svg s={14} vb={16}>{p}</Svg></span>)}
    <span className="flex w-[26px] justify-center"><svg width="10" height="6" viewBox="0 0 10 6"><path d="M0 0h10L5 6z" fill="#fff" /></svg></span>
    <span className="w-[116px] pl-[2px] text-[13.3px] whitespace-pre">06.11.2021  15:34</span>
  </div>
);

const Toolbar = ({ items, children }) => (
  <div className="flex h-[39px] shrink-0 items-center border-b border-[#7b7f82] bg-gradient-to-b from-[#32373b] to-[#2f3438] pb-[2px] pl-[5px]">
    <Handle />
    <div className="flex pl-[2px]">{items.map((n) => <span key={n} className="flex w-[33px] justify-center"><Ic n={n} s={23} /></span>)}</div>
    {children}
  </div>
);

/* ---------- left column ---------- */

const layers = [
  ["airports", "dot", "#e5673b"], ["popp", "dot", "#e9b42d"], ["storagep", "dot", "#c5b996"],
  ["majrivers", "line", "#1b2c8c", 1], ["pipelines", "line", "#a64444"], ["Intersections", "dot", "#e8873a", 1],
  ["railroads", "line", "#7d4520", 1], ["Buffered", "box", "#739e71"], ["rivers", "line", "#151ba0"], ["trails", "line", "#cd8420"],
  ["builtups", "box", "#a5705a"], ["grassland", "box", "#e8718d"], ["lakes", "box", "#bdcf4f"], ["landice", "box", "#91522d"],
  ["swamp", "box", "#d3b33c"], ["trees", "raster", "#ddd"], ["Line length", "box", "#ff9e17"], ["tundra", "box", "#255207"],
  ["regions", "box", "#8c5a98", 1], ["alaska", "box", "#c68a85", 1],
];
const memory = new Set(["Intersections", "Buffered", "Line length"]);

const LayerRow = ({ l: [name, kind, color, on] }) => {
  const sel = name === "Intersections";
  const flat = kind === "line";
  return (
    <div className={"flex h-5 items-center pl-[7px] " + (sel ? "bg-[#593556]" : "")}>
      <span className="w-4"><Arrow hide={name !== "trees"} /></span>
      <span className="flex h-[14px] w-[14px] items-center justify-center rounded-sm border border-[#25292c] bg-[#2d3135]">
        {on ? <svg width="9" height="10" viewBox="0 0 9 10"><path d="M.8 5l2.700 4L8.200.8" stroke="#f3f4f4" strokeWidth="1.500" fill="none" /></svg> : null}
      </span>
      <span className="ml-[6px] flex w-4 justify-center">
        {kind === "dot" && <i className="size-[6px] rounded-full" style={{ background: color }} />}
        {flat && <i className="-ml-0.5 h-[2px] w-[14px]" style={{ background: color }} />}
        {kind === "box" && <i className="size-4 border border-black/25" style={{ background: color }} />}
        {kind === "raster" && <svg width="16" height="12" viewBox="0 0 16 12"><path d="M0 2Q2-1 6 2q4 1 8-2 3 3 2 8-3 2-6-1-3 1-5 4-4 2-5-2z" fill="#dedede" /></svg>}
      </span>
      <span className={(flat ? "ml-1 " : "ml-[6px] ") + "font-bold whitespace-nowrap " + (on ? "text-[#f5f5f5] " : "text-[#8e9091] italic ") + (sel ? "underline decoration-1 underline-offset-[3px]" : "")}>{name}</span>
      {memory.has(name) && <span className="mr-[7px] ml-auto flex size-4 items-center justify-center rounded-sm bg-[#303438]"><i className="h-[4px] w-[9px] border-t-[1.5px] border-l-[1.5px] border-[#4c4e52]" /></span>}
    </div>
  );
};

const fav = <path d="M12 1l3 8h8l-6.500 5 2.500 9-7-5.500L5 23l2.500-9L1 9h8z" fill="#f6e245" stroke="#a8921a" strokeWidth=".8" />;
const bookmarkIc = <g><path d="M2 2h20v20H2z" fill="#cfd2d6" /><path d="M13 1h5v14l-2.500-3-2.500 3z" fill="#5a8fc8" /><path d="M5 2v20" stroke="#888" /></g>;
const projIc = <g><path d="M2 2h20v20H2z" fill="#b6d84a" /><path d="M3 6l18 14M3 20l9-8" stroke="#f4f9dc" strokeWidth="2" /><circle cx="16" cy="8" r="4.500" fill="#23811c" /><path d="M16 10v5" stroke="#333" strokeWidth="1.500" /></g>;
const homeIc = <g><path d="M2 2h8l2 2h10v19H2z" fill="#f0f0f0" /><path d="M6 13l6-6 6 6v7H14v-5h-4v5H6z" fill="#fff" stroke="#222" strokeWidth="1.600" /></g>;

const LeftColumn = () => (
  <div className="flex w-[345px] shrink-0">
    <div className="flex w-[338px] flex-col">
      <div className="h-[21px] pl-1 leading-[19px]">Browser</div>
      <div className="flex h-[30px] items-center pb-[3px] pl-[3px]">
        {["pageAdd", "refresh", "funnel", "treeUp", "info"].map((n) => <span key={n} className="flex w-[25.300px] justify-center"><Ic n={n} s={15} /></span>)}
      </div>
      <div className="flex h-[81px] flex-col border border-[#26292c] bg-[#2a2e32]">
        {[["Favorites", fav], ["Spatial Bookmarks", bookmarkIc], ["Project Home", projIc], ["Home", homeIc]].map(([t, ic], i) => (
          <div key={t} className="flex h-5 shrink-0 items-center pl-[6px]">
            <span className="w-[13px]"><Arrow hide={i === 0} /></span><Svg s={16}>{ic}</Svg><span className="ml-[5px]">{t}</span>
          </div>
        ))}
      </div>
      <div className="flex h-[7px] items-center justify-center"><HGrip /></div>
      <div className="h-[19px] pl-1 leading-[18px]">Layers</div>
      <div className="flex h-[32px] items-center pb-[2px] pl-[3px]">
        {["brush", "group", "eye", "funnelDrop", "eps"].map((n) => <span key={n} className="flex w-[25.500px] justify-center"><Ic n={n} s={16} /></span>)}
        <Drop />
        <span className="w-[3px]" />
        {["treeDown", "treeUp", "pageDel"].map((n) => <span key={n} className="flex w-[25px] justify-center"><Ic n={n} s={16} /></span>)}
      </div>
      <div className="min-h-0 flex-1 border border-[#26292c] bg-[#2a2e32]">
        {layers.map((l) => <LayerRow key={l[0]} l={l} />)}
      </div>
    </div>
    <div className="flex flex-1 items-center justify-center"><VGrip /></div>
  </div>
);

/* ---------- right column ---------- */

const tools = ["Raster analysis", "Raster creation", "Raster terrain analysis", "Raster tools", "Vector analysis", "Vector creation", "Vector general", "Vector geometry", "Vector overlay", "Vector selection", "Vector table", "Vector tiles"];
const DockBtns = () => (
  <div className="ml-auto flex gap-[3px] pr-[2px] text-[#a09d98]">
    <Svg s={11} vb={11}><rect x=".5" y=".5" width="10" height="10" rx="1" stroke="currentColor" strokeDasharray="2 .6" /><path d="M4 2.500h4.500V7H4zM2.500 4.500V8.500H7" stroke="currentColor" /></Svg>
    <Svg s={11} vb={11}><rect x=".5" y=".5" width="10" height="10" rx="1" stroke="currentColor" strokeDasharray="2 .6" /><path d="M2.500 2.500l6 6M8.500 2.500l-6 6" stroke="currentColor" strokeWidth="1.300" /></Svg>
  </div>
);
const RightColumn = () => (
  <div className="flex w-[371px] shrink-0">
    <div className="flex w-[7px] items-center justify-center pl-px"><VGrip /></div>
    <div className="flex flex-1 flex-col">
      <div className="flex h-[16px] items-center pl-1">Processing Toolbox<DockBtns /></div>
      <div className="h-[36px]" />
      <div className="h-[24px] rounded-sm border border-[#26292c] bg-[#2a2e32]" />
      <div className="h-[496px] border border-[#26292c] bg-[#2a2e32] pt-[201px]">
        {tools.map((t) => (
          <div key={t} className="flex h-5 items-center pl-[8px]"><Arrow /><QLogo s={15} className="ml-[11px]" /><span className="ml-[6px]">{t}</span></div>
        ))}
        <div className="flex h-5 items-center pl-[8px]"><Arrow />
          <Svg s={16} vb={16} className="ml-[10px]"><path d="M3 13a6.500 6.500 0 1 1 13 0z" fill="#5bc0ea" /><path d="M7 6l3-2 3 3-3 3z" fill="#4f9a4a" /><path d="M1 2h5M3 4h5M5 3l3 2" stroke="#aaa" /><path d="M0 13.500h16" stroke="#0b0d0e" strokeWidth="4.500" strokeDasharray="3.200 .7" /></Svg>
          <span className="ml-[6px]">GDAL</span></div>
      </div>
      <div className="flex h-[6px] items-center justify-center"><HGrip /></div>
      <div className="flex h-[21px] items-center pb-px pl-1">Results Viewer<DockBtns /></div>
      <div className="h-[191px] border border-[#26292c] bg-[#2a2e32]" />
      <div className="flex h-[4px] items-center justify-center"><HGrip /></div>
      <div className="flex-1 border border-[#26292c] bg-[#2a2e32]" />
    </div>
  </div>
);

/* ---------- status bar ---------- */

const Field = ({ className, children }) => <div className={"flex h-[25px] items-center rounded-sm border border-[#24282b] bg-[#2b2f33] " + className}>{children}</div>;
const Spin = () => (
  <span className="ml-auto flex h-full w-[13px] flex-col items-center justify-center gap-[4px] bg-[#575d63]">
    <svg width="7" height="4" viewBox="0 0 7 4"><path d="M0 4h7L3.500 0z" fill="#b5b8ba" /></svg>
    <svg width="7" height="4" viewBox="0 0 7 4"><path d="M0 0h7L3.500 4z" fill="#b5b8ba" /></svg>
  </span>
);
const StatusBar = () => (
  <div className="flex h-[33px] shrink-0 items-center pt-px pl-[5px] text-[12px]">
    <Field className="w-[234px] pl-2 text-[13px] text-[#8d9092]">
      <Svg s={11} vb={12}><circle cx="5" cy="5" r="4" stroke="#c5c7c8" /><path d="M8 8l3.500 3.500" stroke="#c5c7c8" /></Svg>
      <span className="ml-[8px]">Type to locate (Ctrl+K)</span>
    </Field>
    <span className="ml-[836px] w-[59px] text-[11.700px]">Coordinate</span>
    <Field className="w-[110px] justify-end pr-2">1749821,4716477</Field>
    <Svg s={16} vb={16} className="ml-[4px]"><path d="M3 2l5 5M7 1l2 5M1 6l5 3" stroke="#ddd" strokeWidth="1.600" /><path d="M7 7q6-1 6 4-1 5-6 2z" fill="#e4e4e4" stroke="#222" strokeWidth=".6" /></Svg>
    <span className="ml-[12px] w-[30px] text-[11.700px]">Scale</span>
    <Field className="w-[87px] overflow-hidden pl-[4px] text-[11.700px]">1:4791433<span className="ml-auto flex h-full w-[19px] items-center justify-center bg-[#575d63]"><Drop /></span></Field>
    <Svg s={15} vb={16} className="ml-[11px]"><path d="M4.500 8V5a3.500 3.500 0 0 1 7 0v3" stroke="#bbb" strokeWidth="1.800" /><rect x="2" y="7.500" width="12" height="8" rx="1" fill="#8a8a88" /></Svg>
    <span className="ml-[8px] w-[53px] text-[11.700px]">Magnifier</span>
    <Field className="w-[89px] overflow-hidden pl-[4px] text-[11.700px]">100%<Spin /></Field>
    <span className="ml-[9px] w-[53px] text-[11.700px]">Rotation</span>
    <Field className="w-[89px] overflow-hidden pl-[4px] text-[11.700px]">0.0 °<Spin /></Field>
    <span className="ml-[7px] flex size-[14px] items-center justify-center rounded-sm border border-[#25292c] bg-[#2b2f33]"><svg width="8" height="8" viewBox="0 0 8 8"><path d="M.8 4l2.200 3L7.300.8" stroke="#f3f4f4" strokeWidth="1.500" fill="none" /></svg></span>
    <span className="ml-[5px] w-[53px] text-[11.700px]">Render</span>
    <Svg s={14} vb={16}><circle cx="8" cy="8" r="7" fill="#999" /><path d="M1 8h14M8 1v14M2.500 4.500h11M2.500 11.500h11" stroke="#ddd" /></Svg>
    <span className="ml-[3px] text-[11.700px]">EPSG:2964</span>
    <Svg s={16} vb={16} className="mr-[7px] ml-auto"><path d="M1 7q0-4 4-4h6q4 0 4 4t-4 4H8l-3 3v-3q-4 0-4-4z" fill="#8b8e90" /><path d="M4 7h1.500M7.200 7h1.500M10.500 7H12" stroke="#fff" strokeWidth="1.500" /></Svg>
  </div>
);

/* ---------- attribute table window ---------- */

const cols = ["cat", "LENGTH", "DECRIPTION", "cat_2", "EXSDESC", "F_CODE", "F_CODEDESC", "FCODESC"];
const rows = [
  ["1756.000", "3802.352", "Tanana River", "44.000"], ["1821.000", "3301.978", "Tanana River", "15.000"],
  ["1821.000", "3301.978", "Tanana River", "15.000"], ["3446.000", "14183.395", "Susitna River", "2.000"],
  ["3446.000", "14183.395", "Susitna River", "2.000"], ["3564.000", "2722.240", "Susitna River", "56.000"],
  ["3564.000", "2722.240", "Susitna River", "56.000"], ["3565.000", "12156.290", "Susitna River", "56.000"],
].map((r) => [...r, "Operational", "AN010", "Railroad", "Single"]);
const attrTools = [["pencil"], ["multi", 1], ["saveDim", 1], "|", ["tableDim", 1], ["trash", 1], ["cut", 1], ["copy", 1], ["paste", 1], "|", ["epsSel"], ["rows"], ["invert"], ["unselect"], ["funnel"], ["moveTop"], ["pan"], ["zoomSel"], "|", ["colDim", 1], ["colDim", 1], ["calcEdit"], ["abacus"], "|", ["cond"], "|", ["dockWin"], ["gear"]];

const AttributeTable = () => (
  <div className="absolute top-[45px] left-[215px] flex h-[380px] w-[899px] flex-col rounded-[16px] bg-[#31363a] shadow-[0_1px_8px_3px_rgba(0,0,0,0.45)]">
    <div className="flex h-[36px] items-center pr-[10px] pl-[7px]">
      <QLogo s={22} /><span className="ml-[6px]"><WinBtn k="dots" bright /></span>
      <span className="flex-1 pl-[3px] text-center">Intersections — Features Total: 8, Filtered: 8, Selected: 0 &lt;3&gt;</span>
      <WinBtns bright />
    </div>
    <div className="flex h-[31px] items-center pb-px pl-[6px]">
      {attrTools.map((t, i) => t === "|" ? <span key={i} className="flex w-[7.500px] justify-center"><i className="h-3 w-px bg-[#26292c]" /></span>
        : <span key={i} className="flex w-[25px] justify-center"><Ic n={t[0]} s={15} dim={t[1]} /></span>)}
    </div>
    <div className="ml-[4px] h-[278px] w-[891px] border border-[#272a2d] bg-[#2b2f33]">
      <div className="flex h-[22px] bg-[#31363a]">
        <div className="flex w-[814px] border-b border-[#232629] bg-gradient-to-b from-[#60676c] to-[#50565b] pl-[13px]">
          {cols.map((c) => <div key={c} className="w-[100px] border-r border-[#81868a] text-center leading-[23px] last:border-r-0">{c}</div>)}
        </div>
      </div>
      {rows.map((r, i) => (
        <div key={i} className="flex h-[30px] w-[814px]">
          <div className="mb-px w-[12px] bg-gradient-to-b from-[#60676c] to-[#50565b] text-center leading-[30px]">{i + 1}</div>
          <div className="flex flex-1 pl-px">
            {r.map((v, k) => (
              <div key={k} className={"w-[100px] border-r border-b border-[#26292c] px-[3px] leading-[29px] " + (i === 0 && k === 0 ? "bg-[#3f3340] outline-2 -outline-offset-2 outline-[#0bf57d] " : i % 2 ? "bg-[#31353a] " : "bg-[#2a2e32] ") + (k < 2 || k === 3 ? "text-right" : "")}>{v}</div>
            ))}
          </div>
        </div>
      ))}
    </div>
    <div className="flex flex-1 items-center pr-[8px] pb-[3px] pl-[8px]">
      <div className="flex h-[24px] w-[140px] items-center rounded-sm border border-[#757b80] bg-gradient-to-b from-[#61676d] to-[#50565b] pl-[2px] shadow">
        <Ic n="tableView" s={14} /><span className="ml-[3px]">Show All Features</span>
        <svg width="5" height="3" viewBox="0 0 5 3" className="mt-[14px] ml-auto"><path d="M0 0h5L2.500 3z" fill="#ccc" /></svg>
      </div>
      <span className="mr-[6px] ml-auto"><Ic n="formView" s={14} /></span>
      <span className="flex h-[21px] w-[22px] items-center justify-center rounded-sm border border-[#74797d] bg-[#484d52]"><Ic n="tableView" s={14} /></span>
    </div>
  </div>
);

/* ---------- processing dialog ---------- */

const log = ["QGIS version: 3.22.0-Białowieża", "Qt version: 5.15.2", "Python version: 3.9.7", "GDAL version: 3.3.1", "GEOS version: 3.9.1-CAPI-1.14.2", "PROJ version: Rel. 8.0.1, March 5th, 2021", "PDAL version: 2.3.0 (git-version: Release)"];
const ScrollEnd = ({ up }) => <div className="flex h-[13px] shrink-0 items-center justify-center border border-[#757b80] bg-[#50565b]"><svg width="8" height="4" viewBox="0 0 8 4"><path d={up ? "M0 4h8L4 0z" : "M0 0h8L4 4z"} fill="#b5b8ba" /></svg></div>;
const Scroll = ({ thumb }) => (
  <div className="flex w-[14px] shrink-0 flex-col bg-[#4b5157]"><ScrollEnd up /><div className={"mt-px border border-[#757b80] bg-[#565c61] " + thumb} /><div className="flex-1" /><ScrollEnd /></div>
);
const Btn = ({ className, children }) => <div className={"flex h-[24px] items-center justify-center rounded-sm border border-[#757b80] bg-gradient-to-b from-[#5f666b] to-[#4f555a] whitespace-nowrap shadow " + className}>{children}</div>;

const Dialog = () => (
  <div className="absolute top-[120px] left-[1129px] flex h-[342px] w-[746px] flex-col rounded-[16px] bg-[#31363a] shadow-[0_1px_5px_1px_rgba(0,0,0,0.3)]">
    <div className="flex h-[34px] items-center pr-[10px] pl-[6px]">
      <QLogo s={22} /><span className="ml-[7px]"><WinBtn k="dots" /></span>
      <span className="flex-1 pt-px pr-[1px] text-center text-[#969899]">Line Intersections</span>
      <WinBtns />
    </div>
    <div className="flex h-[204px] pt-[12px] pl-[16px]">
      <div className="flex w-[560px] flex-col">
        <div className="flex h-[29px] items-end">
          <div className="mr-px h-[26px] w-[94px] rounded-t-sm border border-b-0 border-[#6c7276] bg-[#4b5156] text-center leading-[25px]">Parameters</div>
          <div className="h-[28px] w-[45px] rounded-t-sm border border-b-0 border-[#757b80] bg-[#575d63] text-center leading-[27px]">Log</div>
        </div>
        <div className="flex h-[161px] flex-col border border-[#757b80] bg-[#2b2f33]">
          <div className="flex h-[134px]">
            <div className="flex-1 pt-[5px] pl-[5px] text-[#76797b]">{log.map((l) => <div key={l} className="h-[18px] leading-[18px]">{l}</div>)}</div>
            <Scroll thumb="h-[35px]" />
          </div>
          <div className="flex flex-1 items-center justify-end bg-[#565c61]">
            {["save", "copy", "broom"].map((n) => <span key={n} className="flex w-[26px] justify-center"><Ic n={n} s={14} /></span>)}
          </div>
        </div>
      </div>
      <div className="flex w-[17px] flex-col items-center pt-[2px]"><span className="mr-[4px]"><Arrow /></span><span className="mt-[78px] ml-[3px]"><VGrip /></span></div>
      <div className="flex h-[192px] w-[138px] overflow-hidden border border-[#26292c] bg-[#2b2f33]">
        <div className="flex-1 pt-[5px] pl-[4px] text-[#5f6264]">
          <div className="text-[20px] leading-[27px] font-bold text-[#505355]"><div>Line</div><div>intersectio</div><div>ns</div></div>
          <div className="mt-[12px] leading-[18px] whitespace-nowrap">{["This algorithm", "creates point", "features where", "the lines in the", "Intersect layer"].map((t) => <div key={t}>{t}</div>)}</div>
        </div>
        <Scroll thumb="h-[136px]" />
      </div>
    </div>
    <div className="mt-[30px] flex pl-[15px]">
      <div className="h-[26px] w-[630px] rounded-sm border border-[#24282b] bg-[#2a2e32] text-center leading-[24px]">0%</div>
      <Btn className="mt-px ml-[7px] w-[78px] text-[#85898c]">Cancel</Btn>
    </div>
    <div className="mt-[7px] flex pl-[16px]">
      <Btn className="w-[78px] gap-[5px]">
        <Svg s={13} vb={13}><circle cx="6.500" cy="6.500" r="4.200" stroke="#f2f2f2" strokeWidth="2.600" /><path d="M1 1l3 3M12 1L9 4M1 12l3-3M12 12L9 9" stroke="#f2f2f2" strokeWidth="2.200" /><path d="M6.500 1v2.500M6.500 9.500V12M1 6.500h2.500M9.500 6.500H12" stroke="#555b60" strokeWidth="1.500" /></Svg>
        <span><u className="underline-offset-2">H</u>elp</span>
      </Btn>
      <Btn className="ml-[8px] w-[166px]">Run as Batch Process…</Btn>
      <Btn className="ml-[229px] w-[147px] gap-[4px]"><svg width="14" height="11" viewBox="0 0 14 11" fill="none"><path d="M1 6l4 4 8-9" stroke="#eee" strokeWidth="1.200" /></svg>Change Parameters</Btn>
      <Btn className="ml-[8px] w-[78px] gap-[4px]">
        <Svg s={13} vb={13}><circle cx="6.500" cy="6.500" r="6.200" fill="#da4453" /><path d="M4 4l5 5M9 4l-5 5" stroke="#7c2a36" strokeWidth="1.200" /></Svg>
        <span><u className="underline-offset-2">C</u>lose</span>
      </Btn>
    </div>
  </div>
);

/* ---------- dock ---------- */

const dock = [
  [<g><path d="M4 7q0-2 2-2h14l2 3h22v10H4z" fill="#fff" /><path d="M0 10h22l3-0h23v30q0 2-2 2H2q-2 0-2-2z" fill="#6ba4e8" stroke="#3b6aa8" strokeWidth=".8" /><path d="M24 18l10 9h-3v8h-5v-5h-4v5h-5v-8h-3z" fill="#4f7eb8" /></g>, "dot"],
  [<g><path d="M5 13l4-5 4 5q5-3 9-2 3-7 9-9-1 6 4 10 9 7 10 15-1 17-20 18Q4 44 3 27q0-8 2-14z" fill="#ff4a3a" /><path d="M5 13l4-5 4 5q4-3 8-2l3 4-7 9 2 10 14 2q-4 7-14 5Q4 36 4 25q0-6 1-12z" fill="#ff6a2e" /><path d="M22 15Q24 5 31 2q-1 7 4 11 8 9 3 20-5 7-14 6 10-5 8-14-4-7-10-10z" fill="#ff9420" /><path d="M23 14q1-8 8-12-2 8 2 13z" fill="#ffbf36" /><path d="M32 16q7 11-2 19-8 4-14-2 16 2 16-17z" fill="#e8841a" /><circle cx="23" cy="25" r="9.500" fill="#9a4be8" /><path d="M9 18q10-3 15 2-1 5-9 4z" fill="#ffa32a" /></g>, "dot"],
  [<g><rect x="3" y="3" width="42" height="42" rx="2" fill="#262b2d" stroke="#101314" /><text x="9" y="21" fontFamily="Liberation Mono" fontWeight="bold" fontSize="14" fill="#fff">$</text><path d="M19 25h9" stroke="#fff" strokeWidth="1.800" /></g>],
  [<g><circle cx="24" cy="24" r="22" fill="#ddd" /><circle cx="24" cy="24" r="19" fill="#f1f1f1" /><path d="M24 11q10 0 11 9l2 10-6 2-7 5-7-5-6-2 2-10q1-9 11-9z" fill="#7fdb55" stroke="#5db838" strokeLinejoin="round" /><path d="M24 19q4 0 6 3l1 3-3 4-4 2-4-2-3-4 1-3q2-3 6-3z" fill="#f6f6f6" stroke="#5db838" strokeWidth=".6" /></g>],
  [<g><circle cx="24" cy="24" r="22" fill="#1795e8" /><circle cx="24" cy="24" r="13.500" stroke="#d8eefc" strokeWidth="1" strokeDasharray="4 1" /><circle cx="24" cy="23.500" r="10.500" fill="#fafafa" /><path d="M15 28l-1 8 8-3z" fill="#fafafa" /></g>],
  [<g><rect x="5" y="3" width="38" height="42" rx="3" fill="#2b2e33" stroke="#15181b" /><path d="M5 6h6v36H5z" fill="#1b1e21" /><path d="M12 3h7v19l-3.500-3.500L12 22z" fill="#c53434" /><path d="M42 14q-8 2-12 17-1 11 6 9 5-1 6-4" stroke="#1f9cf0" strokeWidth="3.200" /></g>, "dot"],
  [null, "bar"],
  [<g><circle cx="24" cy="24" r="22" fill="#0fb2fb" /><path d="M9 14q8-6 13-6 8 2 15 0-4 4-10 5l-6 5 6-1 9-3q-2 5-8 7l-4 2 16 12-15-6 5 14q-7-8-10-11l-9 0 8-4-2-4q0-5 6-8-8 1-14-2z" fill="#fff" /></g>, "dot"],
];
const Dock = () => (
  <div className="absolute top-[1016px] left-[716px] flex h-[59px] w-[488px] rounded-[12px] bg-[#2c3035]/66 pl-[12px] shadow-[0_0_2px_1px_rgba(0,0,0,0.28)]">
    {dock.map(([art, mark], i) => (
      <div key={i} className="flex w-[58px] flex-col items-center pt-[4px]">
        {art ? <Svg s={48} vb={48}>{art}</Svg> : <QLogo s={48} />}
        {mark === "dot" && <i className="size-[5px] rounded-full bg-[#a0569a]" />}
        {mark === "bar" && <i className="h-[5px] w-[58px] shrink-0 rounded-full bg-[#a0569a]" />}
      </div>
    ))}
  </div>
);

export default function App() {
  return (
    <div className="relative flex h-[1080px] w-[1920px] flex-col overflow-hidden bg-[#31363a] font-['Noto_Sans',sans-serif] text-[13px] text-[#eceded]">
      <div className="flex h-[31px] shrink-0 items-center pl-[5px]">
        <div className="flex h-[20px] w-[126px] items-center justify-center gap-[19px] rounded-[5px] bg-[#111315]">
          <Svg s={13} vb={13} className="text-[#e8e8e8]">{[1, 5.5, 10].map((y) => [1, 5.5, 10].map((x) => <rect key={x + "" + y} x={x} y={y} width="1.800" height="1.800" fill="currentColor" />))}</Svg>
          <Svg s={13} vb={13}><rect x="1.500" y="1.500" width="10" height="10" stroke="#d5d5d5" rx="1" /></Svg>
          <Svg s={13} vb={13}><path d="M1 5h7q3 0 4-3.500M12 7.500H6q-3 0-4 4" stroke="#aaa" /></Svg>
        </div>
        <div className="flex pl-[12px]">{menus.map(([m, w]) => <span key={m} className={w}>{m}</span>)}</div>
        <Tray />
      </div>
      <div className="flex h-[36px] shrink-0 items-center border-t border-b border-t-[#272b2e] border-b-[#7b7f82] pr-[10px] pb-px pl-[7px]">
        <QLogo s={22} /><span className="ml-[7px]"><WinBtn k="dots" /></span>
        <span className="flex-1 text-center text-[12px] text-[#85888a]">Untitled — QGIS</span>
        <WinBtns />
      </div>
      <Toolbar items={["page", "folder", "save", "layoutNew", "wrench", "style"]} />
      <Toolbar items={["layerAdd", "globe", "vect", "feather", "chip", "mesh"]}>
        <span className="ml-[901px]"><Handle /></span>
        <span className="mb-1 ml-[10px] flex h-[21px] w-[16px] items-start justify-center border-l-2 border-[#1f2d40] bg-[#5f90c6] text-[10px] leading-[14px]">a</span>
        <span className="mb-[14px] ml-[15px] text-[10px] text-[#aaa]">"</span>
      </Toolbar>
      <div className="flex h-[39px] shrink-0 items-center border-b border-[#7b7f82] pb-[2px] pl-[5px]">
        <Handle />
        {["select", "form", "desel"].map((n) => <React.Fragment key={n}><span className="flex w-[36px] justify-center pl-[2px]"><Ic n={n} s={22} /></span><span className="w-[9px]"><Drop /></span></React.Fragment>)}
        <span className="flex w-[38px] justify-center"><Ic n="loc" s={22} /></span>
        <span className="ml-[5px]"><Handle /></span><span className="ml-[7px]"><Ic n="multi" s={22} dim /></span>
      </div>
      <div className="flex min-h-0 flex-1">
        <LeftColumn />
        <div className="min-w-0 flex-1"><MapCanvas /></div>
        <RightColumn />
      </div>
      <StatusBar />
      <AttributeTable />
      <Dialog />
      <Dock />
    </div>
  );
}
